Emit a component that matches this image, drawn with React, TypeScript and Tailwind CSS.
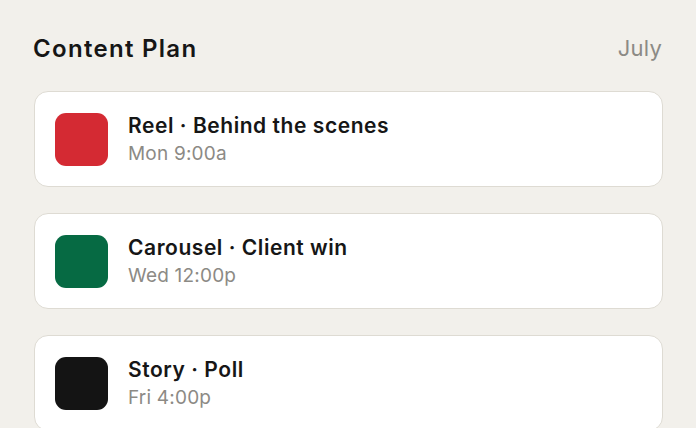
import React from "react";

const items = [
  { title: "Reel · Behind the scenes", time: "Mon 9:00a", color: "bg-[#d42a33]" },
  { title: "Carousel · Client win", time: "Wed 12:00p", color: "bg-[#066a43]" },
  { title: "Story · Poll", time: "Fri 4:00p", color: "bg-[#141414]" },
];

export default function App() {
  return (
    <div
      className="w-[696px] h-[428px] overflow-hidden bg-[#f2f0eb] px-[33px] pt-[31px]"
      style={{ fontFamily: "Inter, 'Noto Sans', sans-serif" }}
    >
      <div className="flex items-center justify-between h-[34px] pr-[1px]">
        <h1 className="text-[24px] font-semibold text-[#161616] tracking-[1.3px] pt-[2px]">Content Plan</h1>
        <span className="text-[22px] text-[#8c8a85] tracking-[0.2px]">July</span>
      </div>
      <div className="mt-[26px] flex flex-col gap-[26px] pl-[1px]">
        {items.map((it) => (
          <div
            key={it.title}
            className="flex items-center gap-[20px] h-[96px] rounded-[14px] border-[1.5px] border-[#dedbd3] bg-white px-[20px]"
          >
            <div className={`w-[53px] h-[53px] rounded-[11px] ${it.color}`} />
            <div className="flex flex-col">
              <span className="text-[21px] font-semibold text-[#161616] leading-[27px] tracking-[0.55px]">{it.title}</span>
              <span className="text-[19px] text-[#8c8a85] leading-[25px] tracking-[0.2px] mt-[2px]">{it.time}</span>
            </div>
          </div>
        ))}
      </div>
    </div>
  );
}
